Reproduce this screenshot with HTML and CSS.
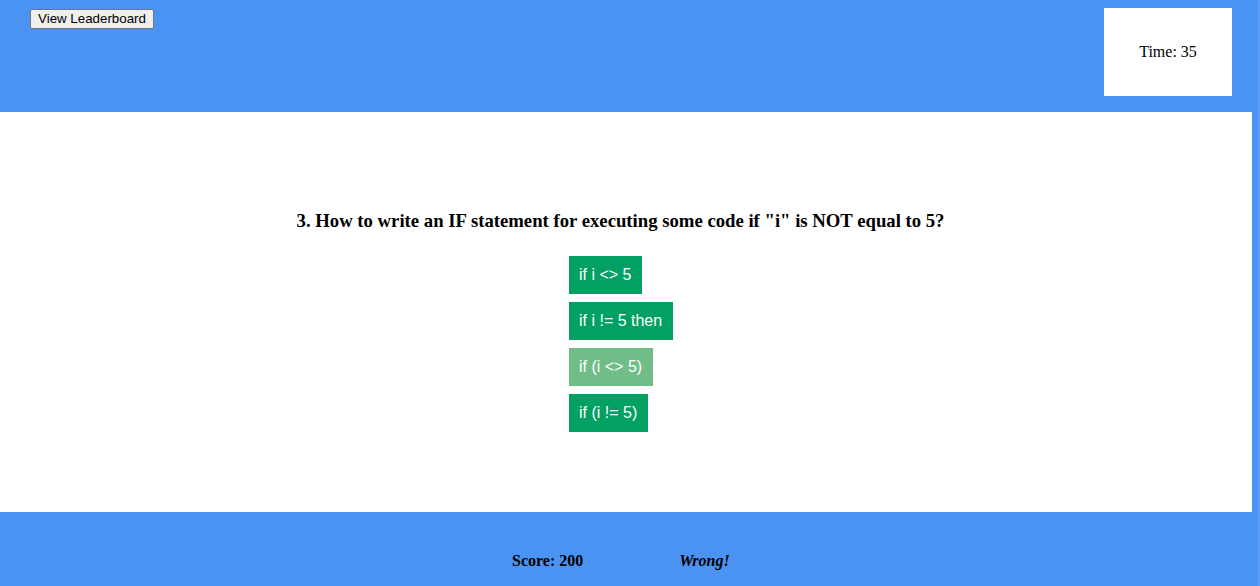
FILE: index.html
```html
<!DOCTYPE html>
<html>
<head>
<meta charset="utf-8">
<link rel="stylesheet" href="styles.css">
</head>
<body>
<header class="top">
  <div class="left"><button class="lb-btn">View Leaderboard</button></div>
  <div class="timer">Time: 35</div>
</header>
<main class="quiz">
  <h3 class="question">3. How to write an IF statement for executing some code if "i" is NOT equal to 5?</h3>
  <div class="options">
    <div class="opt">if i &lt;&gt; 5</div>
    <div class="opt">if i != 5 then</div>
    <div class="opt faded">if (i &lt;&gt; 5)</div>
    <div class="opt">if (i != 5)</div>
  </div>
</main>
<footer class="bottom">
  <span class="score">Score: 200</span>
  <span class="result">Wrong!</span>
</footer>
</body>
</html>
```

FILE: styles.css
```css
html, body {
  margin: 0;
  padding: 0;
}
body {
  background: #4a93f2;
  font-family: "Liberation Serif", "Times New Roman", serif;
  width: 1260px;
  height: 586px;
  overflow: hidden;
  box-shadow: inset -2px 0 0 #5a9ef4;
}
.top {
  height: 112px;
  display: flex;
  justify-content: space-between;
  align-items: flex-start;
  width: 1252px;
}
.left {
  padding: 9px 0 0 30px;
}
.lb-btn {
  font-family: "Liberation Sans", Arial, sans-serif;
  font-size: 13.33px;
  height: 20px;
  padding: 0 6px;
  line-height: 16px;
  color: #000;
  background: #efefef;
  border: 1px solid #767676;
  border-radius: 2px;
  width: 124px;
}
.timer {
  margin: 8px 20px 0 0;
  width: 128px;
  height: 88px;
  background: #fff;
  display: flex;
  align-items: center;
  justify-content: center;
  font-size: 16px;
  color: #000;
}
.quiz {
  background: #fff;
  width: 1252px;
  height: 400px;
  box-sizing: border-box;
  padding-top: 98px;
}
.question {
  margin: 0;
  font-size: 18.72px;
  line-height: 22px;
  font-weight: bold;
  text-align: center;
  padding-right: 11px;
  color: #000;
}
.options {
  margin: 24px 0 0 569px;
  display: flex;
  flex-direction: column;
  align-items: flex-start;
  gap: 8px;
}
.opt {
  background: #02a062;
  color: #fff;
  font-family: "Liberation Sans", Arial, sans-serif;
  font-size: 16px;
  line-height: 18px;
  padding: 10px 11px 10px 10px;
}
.opt.faded {
  background: #70bd88;
}
.bottom {
  width: 1252px;
  height: 74px;
  box-sizing: border-box;
  padding: 39px 0 0 512px;
  display: flex;
  gap: 96px;
  font-size: 16px;
  line-height: 20px;
  font-weight: bold;
  color: #000;
}
.result {
  font-style: italic;
}
```
